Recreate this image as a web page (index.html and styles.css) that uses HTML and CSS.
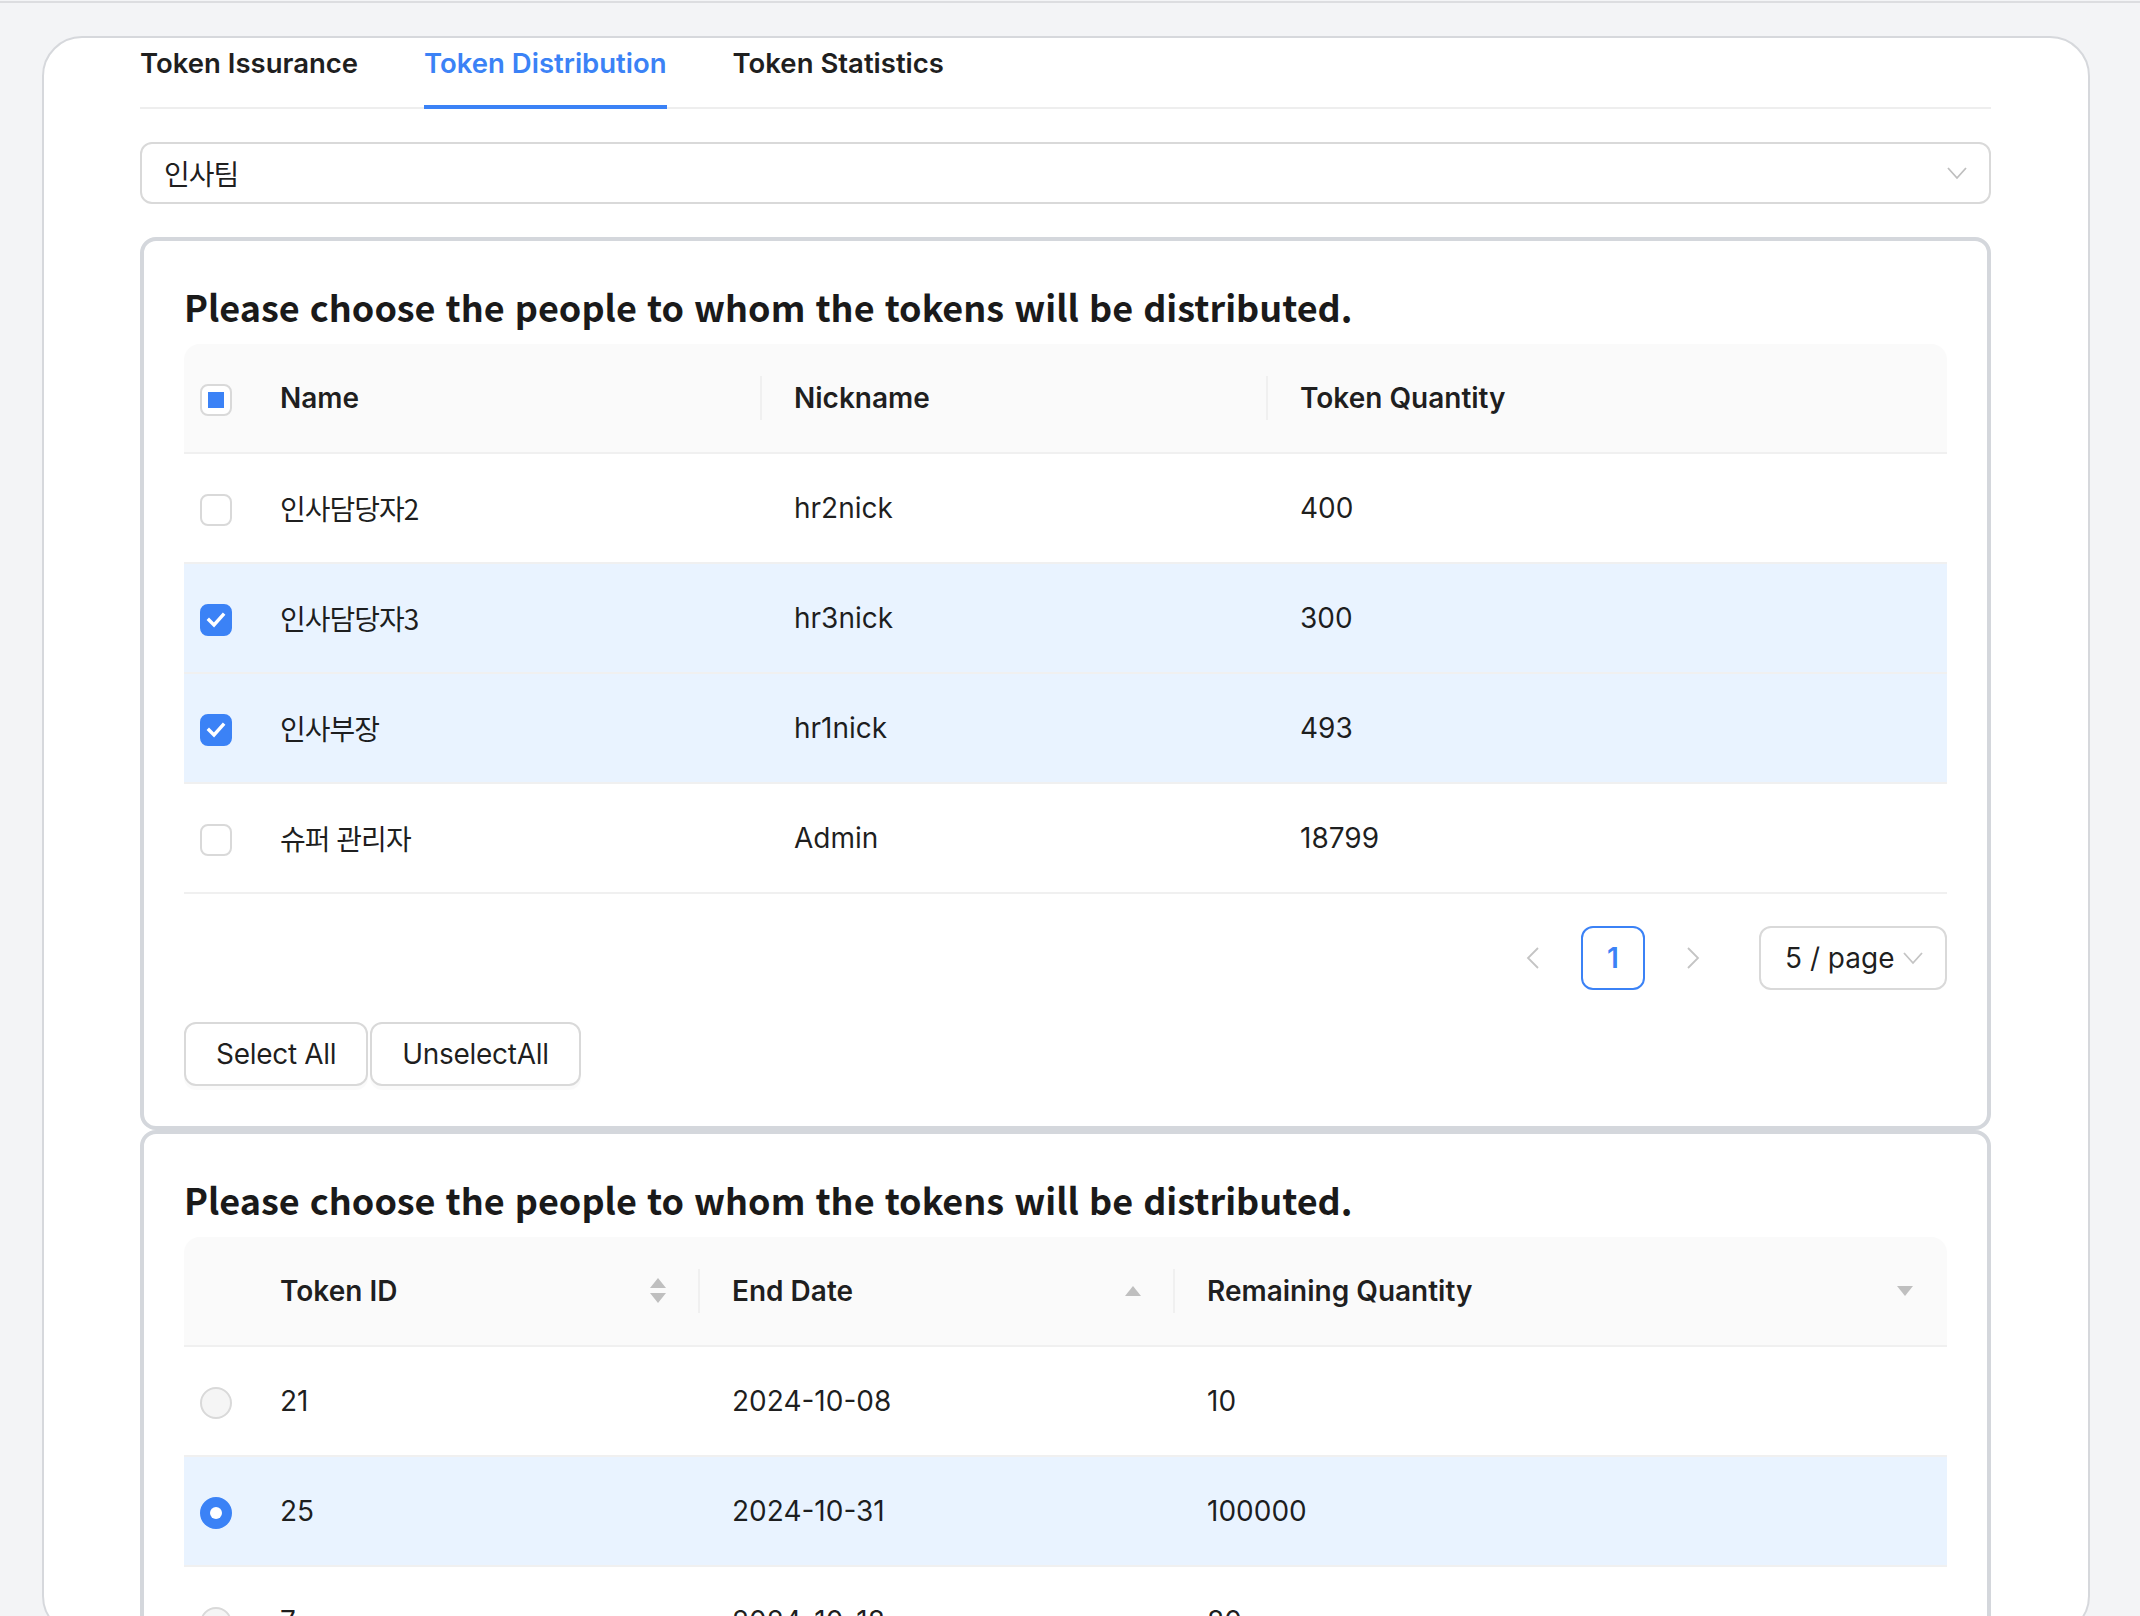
FILE: index.html
```html
<!DOCTYPE html>
<html lang="ko">
<head>
<meta charset="utf-8">
<title>Token Distribution</title>
<link rel="stylesheet" href="styles.css">
</head>
<body>
<div class="topline"></div>
<main class="shell">
  <nav class="tabs">
    <div class="tab">Token Issurance</div>
    <div class="tab active">Token Distribution</div>
    <div class="tab">Token Statistics</div>
  </nav>

  <div class="select">
    <span class="select-value">인사팀</span>
    <svg class="chev" width="20" height="14" viewBox="0 0 20 14"><path d="M1 2 L10 12 L19 2" fill="none" stroke="#bfbfbf" stroke-width="1.8"/></svg>
  </div>

  <section class="panel">
    <h2 class="panel-title">Please choose the people to whom the tokens will be distributed.</h2>
    <table class="grid">
      <colgroup><col class="c-sel"><col class="c-name"><col class="c-nick"><col></colgroup>
      <thead>
        <tr>
          <th class="sel"><span class="cb cb-ind"><span class="cb-dot"></span></span></th>
          <th class="div">Name</th>
          <th class="div">Nickname</th>
          <th>Token Quantity</th>
        </tr>
      </thead>
      <tbody>
        <tr>
          <td class="sel"><span class="cb"></span></td>
          <td class="ko">인사담당자2</td>
          <td>hr2nick</td>
          <td>400</td>
        </tr>
        <tr class="on">
          <td class="sel"><span class="cb cb-on"><svg width="20" height="16" viewBox="0 0 20 16"><path d="M3 8 L8 13 L17 3" fill="none" stroke="#fff" stroke-width="3.4" stroke-linecap="square"/></svg></span></td>
          <td class="ko">인사담당자3</td>
          <td>hr3nick</td>
          <td>300</td>
        </tr>
        <tr class="on">
          <td class="sel"><span class="cb cb-on"><svg width="20" height="16" viewBox="0 0 20 16"><path d="M3 8 L8 13 L17 3" fill="none" stroke="#fff" stroke-width="3.4" stroke-linecap="square"/></svg></span></td>
          <td class="ko">인사부장</td>
          <td>hr1nick</td>
          <td>493</td>
        </tr>
        <tr>
          <td class="sel"><span class="cb"></span></td>
          <td class="ko">슈퍼 관리자</td>
          <td>Admin</td>
          <td>18799</td>
        </tr>
      </tbody>
    </table>

    <div class="pager">
      <span class="pg-arrow"><svg width="14" height="22" viewBox="0 0 14 22"><path d="M12 1 L2 11 L12 21" fill="none" stroke="#c4c4c4" stroke-width="1.8"/></svg></span>
      <span class="pg-item">1</span>
      <span class="pg-arrow"><svg width="14" height="22" viewBox="0 0 14 22"><path d="M2 1 L12 11 L2 21" fill="none" stroke="#c4c4c4" stroke-width="1.8"/></svg></span>
      <span class="pg-size">5 / page <svg width="20" height="14" viewBox="0 0 20 14"><path d="M1 2 L10 12 L19 2" fill="none" stroke="#c4c4c4" stroke-width="1.8"/></svg></span>
    </div>

    <div class="actions">
      <button class="btn">Select All</button>
      <button class="btn">UnselectAll</button>
    </div>
  </section>

  <section class="panel panel-next">
    <h2 class="panel-title">Please choose the people to whom the tokens will be distributed.</h2>
    <table class="grid">
      <colgroup><col class="c-sel"><col class="c-id"><col class="c-date"><col></colgroup>
      <thead>
        <tr>
          <th class="sel"></th>
          <th class="div"><div class="th-in">Token ID
            <svg class="sorter" width="16" height="26" viewBox="0 0 16 26"><path d="M8 0 L16 10 L0 10 Z M0 15 L16 15 L8 25 Z" fill="#bfbfbf"/></svg></div></th>
          <th class="div"><div class="th-in">End Date
            <svg class="sorter" width="16" height="10" viewBox="0 0 16 10"><path d="M8 0 L16 10 L0 10 Z" fill="#bfbfbf"/></svg></div></th>
          <th><div class="th-in">Remaining Quantity
            <svg class="sorter" width="16" height="10" viewBox="0 0 16 10"><path d="M0 0 L16 0 L8 10 Z" fill="#bfbfbf"/></svg></div></th>
        </tr>
      </thead>
      <tbody>
        <tr>
          <td class="sel"><span class="rd"></span></td>
          <td>21</td>
          <td>2024-10-08</td>
          <td>10</td>
        </tr>
        <tr class="on">
          <td class="sel"><span class="rd rd-on"><span class="rd-dot"></span></span></td>
          <td>25</td>
          <td>2024-10-31</td>
          <td>100000</td>
        </tr>
        <tr>
          <td class="sel"><span class="rd"></span></td>
          <td>7</td>
          <td>2024-10-18</td>
          <td>80</td>
        </tr>
      </tbody>
    </table>
  </section>
</main>
</body>
</html>
```

FILE: styles.css
```css
html, body {
  margin: 0;
  padding: 0;
}

body {
  background: #f3f4f6;
  font-family: Inter, "Noto Sans CJK KR", sans-serif;
  font-size: 28px;
  color: rgba(0, 0, 0, 0.88);
}

.topline {
  height: 2px;
  margin-top: 1px;
  background: #dcdde0;
}

.shell {
  box-sizing: border-box;
  margin: 33px 0 0 42px;
  width: 2048px;
  height: 1600px;
  background: #fff;
  border: 2px solid #d6d8dc;
  border-radius: 40px;
  padding: 0 97px 0 96px;
  overflow: hidden;
}

/* tabs */
.tabs {
  display: flex;
  gap: 66px;
  padding-top: 3px;
  border-bottom: 2px solid #eeeeee;
}

.tab {
  position: relative;
  font-size: 27.5px;
  line-height: 44px;
  padding-bottom: 22px;
  font-weight: 600;
  color: #1f1f1f;
}

.tab.active {
  color: #3b82f6;
}

.tab.active::after {
  content: "";
  position: absolute;
  left: 0;
  right: 0;
  bottom: -2px;
  height: 4px;
  background: #3b82f6;
}

/* select */
.select {
  box-sizing: border-box;
  margin-top: 33px;
  height: 62px;
  border: 2px solid #d9d9d9;
  border-radius: 12px;
  padding: 0 22px;
  display: flex;
  align-items: center;
  justify-content: space-between;
}

.select-value {
  font-family: "Noto Sans CJK KR", sans-serif;
  font-size: 28px;
  letter-spacing: -1px;
}

/* panels */
.panel {
  margin-top: 33px;
  border: 4px solid #d4d7dc;
  border-radius: 16px;
  padding: 40px;
}

.panel-next {
  margin-top: 0;
}

.panel-title {
  margin: 0 0 16px;
  padding-top: 3px;
  font-family: "Noto Sans CJK KR", sans-serif;
  font-weight: 700;
  font-size: 36px;
  line-height: 44px;
  color: #1a1a1a;
}

/* table */
.grid {
  width: 100%;
  table-layout: fixed;
  border-collapse: separate;
  border-spacing: 0;
}

.c-sel { width: 64px; }
.c-name { width: 514px; }
.c-nick { width: 506px; }
.c-id { width: 452px; }
.c-date { width: 475px; }

.grid th,
.grid td {
  padding: 32px;
  line-height: 44px;
  text-align: left;
  border-bottom: 2px solid #f0f0f0;
  white-space: nowrap;
}

.grid th {
  position: relative;
  background: #fafafa;
  font-weight: 600;
}

.grid th:first-child { border-top-left-radius: 16px; }
.grid th:last-child { border-top-right-radius: 16px; }

.grid th.div::before {
  content: "";
  position: absolute;
  right: 0;
  top: 50%;
  width: 2px;
  height: 44px;
  margin-top: -22px;
  background: #f0f0f0;
}

.grid .sel {
  padding-left: 0;
  padding-right: 0;
  text-align: center;
}

.grid tr.on td {
  background: #e9f3ff;
}

.grid td.ko {
  font-family: "Noto Sans CJK KR", sans-serif;
  letter-spacing: -1px;
}

.th-in {
  display: flex;
  align-items: center;
  justify-content: space-between;
}

.sorter {
  margin-right: 2px;
}

/* checkbox */
.cb {
  box-sizing: border-box;
  display: inline-flex;
  align-items: center;
  justify-content: center;
  width: 32px;
  height: 32px;
  border: 2px solid #d9d9d9;
  border-radius: 8px;
  background: #fff;
  vertical-align: middle;
}

.cb-on {
  background: #3b82f6;
  border-color: #3b82f6;
}

.cb-dot {
  width: 16px;
  height: 16px;
  background: #3b82f6;
}

/* radio */
.rd {
  box-sizing: border-box;
  display: inline-flex;
  align-items: center;
  justify-content: center;
  width: 32px;
  height: 32px;
  border: 2px solid #d9d9d9;
  border-radius: 50%;
  background: #f5f5f5;
  vertical-align: middle;
}

.rd-on {
  background: #3b82f6;
  border-color: #3b82f6;
}

.rd-dot {
  width: 12px;
  height: 12px;
  border-radius: 50%;
  background: #fff;
}

/* pagination */
.pager {
  margin-top: 32px;
  display: flex;
  justify-content: flex-end;
  align-items: center;
}

.pg-arrow {
  width: 64px;
  height: 64px;
  display: flex;
  align-items: center;
  justify-content: center;
}

.pg-item {
  box-sizing: border-box;
  width: 64px;
  height: 64px;
  margin: 0 16px;
  display: flex;
  align-items: center;
  justify-content: center;
  border: 2px solid #3b82f6;
  border-radius: 12px;
  color: #3b82f6;
  font-weight: 600;
}

.pg-size {
  box-sizing: border-box;
  margin-left: 34px;
  width: 188px;
  height: 64px;
  padding: 0 22px 0 24px;
  display: flex;
  align-items: center;
  justify-content: space-between;
  border: 2px solid #d9d9d9;
  border-radius: 12px;
}

/* buttons */
.actions {
  margin-top: 32px;
  display: flex;
  gap: 2px;
}

.btn {
  box-sizing: border-box;
  height: 64px;
  padding: 0 30px;
  border: 2px solid #d9d9d9;
  border-radius: 12px;
  background: #fff;
  font-family: Inter, sans-serif;
  font-size: 28px;
  letter-spacing: -0.3px;
  color: rgba(0, 0, 0, 0.88);
  box-shadow: 0 4px 0 rgba(0, 0, 0, 0.02);
}
```
